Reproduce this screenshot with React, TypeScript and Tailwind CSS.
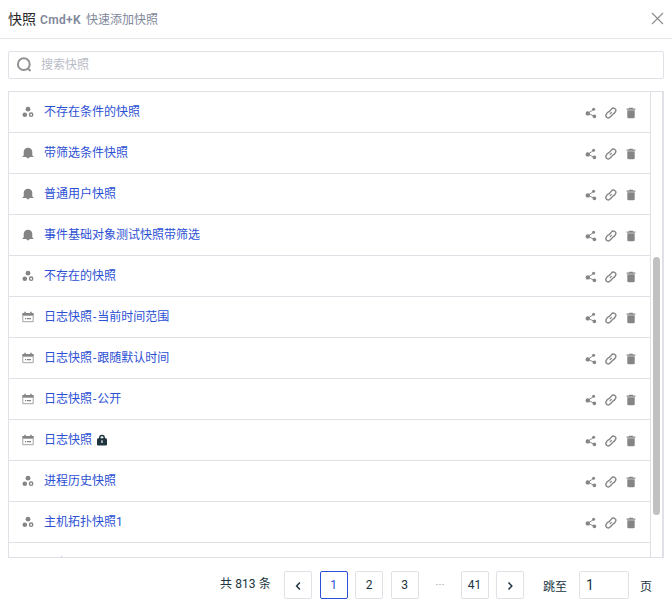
import React from "react";

type Kind = "group" | "bell" | "calendar";

interface Snapshot {
  name: string;
  range?: string;
  kind: Kind;
  locked?: boolean;
}

const snapshots: Snapshot[] = [
  { name: "不存在条件的快照", kind: "group" },
  { name: "带筛选条件快照", kind: "bell" },
  { name: "普通用户快照", kind: "bell" },
  { name: "事件基础对象测试快照带筛选", kind: "bell" },
  { name: "不存在的快照", kind: "group" },
  { name: "日志快照", range: "当前时间范围", kind: "calendar" },
  { name: "日志快照", range: "跟随默认时间", kind: "calendar" },
  { name: "日志快照", range: "公开", kind: "calendar" },
  { name: "日志快照", kind: "calendar", locked: true },
  { name: "进程历史快照", kind: "group" },
  { name: "主机拓扑快照1", kind: "group" },
];

function KindIcon({ kind }: { kind: Kind }) {
  if (kind === "group") {
    return (
      <svg width="12" height="12" viewBox="0 0 12 12" fill="#858585">
        <circle cx="6" cy="3.2" r="2.4" />
        <circle cx="2.8" cy="8.7" r="2.3" />
        <circle cx="9.1" cy="8.7" r="1.65" fill="none" stroke="#858585" strokeWidth="1.4" />
      </svg>
    );
  }
  if (kind === "bell") {
    return (
      <svg width="12" height="12" viewBox="0 0 12 12" fill="#858585">
        <path d="M6 .8c2.600 0 4.300 1.700 4.300 4.200v3.400l1.100.8v.9H.6v-.9l1.100-.8V5C1.700 2.500 3.400.8 6 .8z" />
        <path d="M4.500 10h3c0 .8-.6 1.300-1.500 1.300S4.500 10.800 4.500 10z" />
      </svg>
    );
  }
  return (
    <svg width="12" height="12" viewBox="0 0 12 12" fill="#858585">
      <path d="M.3 2h11.400v2.700H.3z" />
      <path d="M2.300.8h1.500v2H2.300zM8.200.8h1.500v2H8.200z" />
      <path d="M.8 4.500v6.200h10.400V4.500" fill="none" stroke="#a3a3a3" strokeWidth="1" />
      <path d="M3 7h1v1.200H3zM4.800 7h4.200v1.200H4.800z" />
    </svg>
  );
}

function ShareIcon() {
  return (
    <svg width="12" height="12" viewBox="0 0 12 12" fill="#858585">
      <path d="M8.600 2.500 2.700 6.300l6.700 3" fill="none" stroke="#858585" strokeWidth=".9" />
      <circle cx="8.600" cy="2.300" r="1.500" />
      <circle cx="2.800" cy="6.400" r="2.200" />
      <circle cx="9.400" cy="9.400" r="1.800" />
    </svg>
  );
}

function LinkIcon() {
  return (
    <svg width="12" height="12" viewBox="0 0 12 12" fill="none" stroke="#858585" strokeWidth="1.400" strokeLinecap="round">
      <path d="M4.500 4.300 6.400 2.100a2.350 2.350 0 0 1 3.900 2.800c-.5 1-1.500 2.100-2.700 2.500" />
      <path d="M7.100 7.900 5.200 9.900a2.350 2.350 0 0 1-3.900-2.800c.5-1 1.500-2.100 2.700-2.500" />
      <path d="m5.200 6.700 1.200-1.300" strokeWidth="1.200" />
    </svg>
  );
}

function TrashIcon() {
  return (
    <svg width="12" height="12" viewBox="0 0 12 12" fill="#858585">
      <path d="M4.200.8h3.600l.4.8h2.200v1.200H1.600V1.600h2.200z" />
      <path d="M2.300 3.300h7.400v6.800c0 .8-.5 1.200-1.200 1.200h-5c-.7 0-1.200-.4-1.200-1.200z" />
    </svg>
  );
}

function LockIcon() {
  return (
    <svg className="ml-[5px]" width="10" height="12" viewBox="0 0 10 12">
      <path d="M2.800 5V3.600a2.200 2.200 0 0 1 4.400 0V5" fill="none" stroke="#20343f" strokeWidth="1.500" />
      <rect x="0" y="4.200" width="10" height="7.300" rx="1.300" fill="#20343f" />
      <path d="M4.400 6.300h1.200v2.700H4.400z" fill="#fff" />
    </svg>
  );
}

function Row({ item }: { item: Snapshot }) {
  return (
    <li className="flex h-[41px] shrink-0 items-center border-b border-[#dfe1e6] pr-[13px] pl-[13px]">
      <KindIcon kind={item.kind} />
      <a className="ml-[10px] flex items-center text-[12px] leading-4 text-[#2c50d4]">
        <span>
          {item.name}
          {item.range && (
            <>
              <span className="pr-[1px] pl-[1px]">-</span>
              {item.range}
            </>
          )}
        </span>
        {item.locked && <LockIcon />}
      </a>
      <span className="mt-[2px] ml-auto flex gap-2">
        <ShareIcon />
        <LinkIcon />
        <TrashIcon />
      </span>
    </li>
  );
}

function PageButton({ children, active }: { children: React.ReactNode; active?: boolean }) {
  return (
    <button
      className={
        "flex size-7 items-center justify-center rounded-[2px] border text-[12px] " +
        (active ? "border-[#2c50d4] text-[#2c50d4]" : "border-[#dfe1e6] text-[#20343f]")
      }
    >
      {children}
    </button>
  );
}

function Chevron({ d }: { d: string }) {
  return (
    <svg className="mt-px" width="10" height="10" viewBox="0 0 10 10" fill="none" stroke="#20343f" strokeWidth="1.500">
      <path d={d} />
    </svg>
  );
}

export default function App() {
  return (
    <main className="flex h-[608px] w-[672px] flex-col overflow-hidden bg-white font-['Roboto','Noto_Sans_CJK_SC',sans-serif]">
      <header className="flex h-[39px] shrink-0 items-center border-b border-[#e4e5e9] pr-2 pl-2">
        <h1 className="text-[14px] leading-5 text-[#262626]">快照</h1>
        <span className="mt-[2px] ml-1 flex text-[12px] leading-5 text-[#81879b]">
          <span className="w-[46px] font-semibold tracking-[0.35px]">Cmd+K</span>
          <span>快速添加快照</span>
        </span>
        <svg className="mb-px ml-auto" width="13" height="13" viewBox="0 0 13 13" stroke="#8c8c8c" strokeWidth="1.100">
          <path d="m1 1 11 11M12 1 1 12" />
        </svg>
      </header>

      <label className="mx-2 mt-3 flex h-7 shrink-0 items-center rounded-[2px] border border-[#dfe1e6] pl-[7px]">
        <svg width="17" height="16" viewBox="0 0 17 16" fill="none" stroke="#929292" strokeWidth="2">
          <circle cx="7.800" cy="7.200" r="5.900" />
          <path d="m11.900 11.400 2.600 2.600" />
        </svg>
        <span className="ml-2 text-[12px] leading-4 text-[#b9bcc6]">搜索快照</span>
      </label>

      <section className="mx-2 mt-3 flex h-[467px] shrink-0 overflow-hidden border border-r-2 border-[#dfe1e6]">
        <ul className="flex w-[642px] shrink-0 flex-col border-r border-[#dfe1e6]">
          {snapshots.map((item, i) => (
            <Row key={i} item={item} />
          ))}
          <li className="flex h-[14px] shrink-0 items-end pl-[52px]">
            <i className="h-px w-px bg-[#aebbee]" />
          </li>
        </ul>
        <div className="flex-1 pt-[165px] pl-[2px]">
          <div className="h-[258px] w-[7px] rounded-full bg-[#c1c1c1]" />
        </div>
      </section>

      <footer className="mt-[13px] flex h-7 shrink-0 items-center pl-[220px] text-[12px] text-[#20343f]">
        <span className="-mt-[2px] w-16 tracking-[0.1px] whitespace-nowrap">共 813 条</span>
        <nav className="flex items-center gap-[7.500px]">
          <PageButton>
            <Chevron d="M6.900 1.500 3.600 5l3.300 3.500" />
          </PageButton>
          <PageButton active>1</PageButton>
          <PageButton>2</PageButton>
          <PageButton>3</PageButton>
          <span className="mb-[2px] flex w-[27px] justify-center gap-px">
            <i className="h-px w-[2px] bg-[#c4c8cf]" />
            <i className="h-px w-[2px] bg-[#c4c8cf]" />
            <i className="h-px w-[2px] bg-[#c4c8cf]" />
          </span>
          <PageButton>41</PageButton>
          <PageButton>
            <Chevron d="M3.500 1.500 6.800 5 3.500 8.500" />
          </PageButton>
        </nav>
        <span className="mt-1 ml-[19px]">跳至</span>
        <span className="ml-3 flex h-7 w-[50px] items-center rounded-[2px] border border-[#dfe1e6] pl-[6px] text-[14px]">1</span>
        <span className="mt-1 ml-[11px]">页</span>
      </footer>
    </main>
  );
}
